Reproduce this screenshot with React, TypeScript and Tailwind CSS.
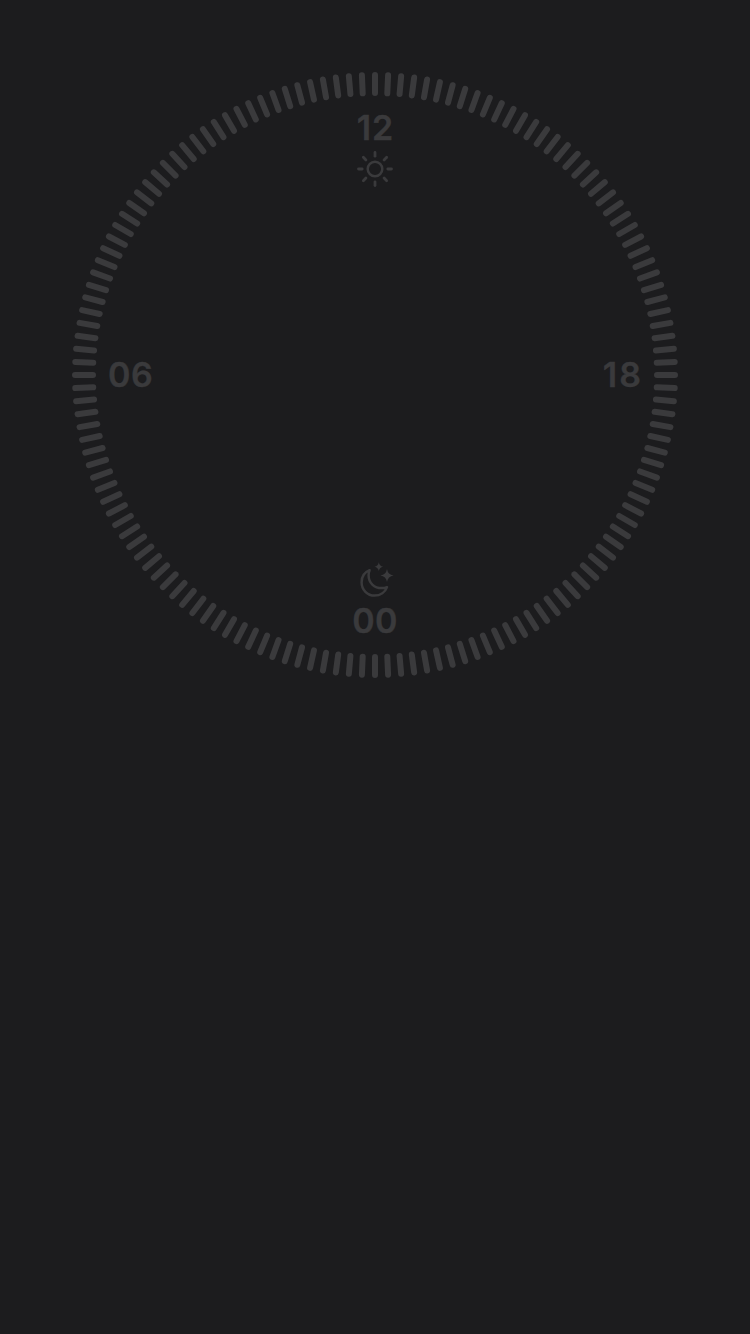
import React from "react";

const TICKS = Array.from({ length: 144 }, (_, i) => i * 2.5);
const RAYS = [0, 45, 90, 135, 180, 225, 270, 315];

function TickRing() {
  return (
    <svg
      className="absolute inset-0 size-full"
      viewBox="-303 -303 606 606"
      stroke="currentColor"
      strokeWidth={6}
      strokeLinecap="round"
    >
      {TICKS.map((angle) => (
        <line key={angle} x1={0} y1={-300} x2={0} y2={-282} transform={`rotate(${angle})`} />
      ))}
    </svg>
  );
}

function SunIcon() {
  return (
    <svg
      className="size-9"
      viewBox="-18 -18 36 36"
      fill="none"
      stroke="currentColor"
      strokeWidth={2.8}
      strokeLinecap="round"
    >
      <circle r={7.3} strokeWidth={2.5} />
      {RAYS.map((angle) => (
        <line key={angle} x1={0} y1={-12.8} x2={0} y2={-16.5} transform={`rotate(${angle})`} />
      ))}
    </svg>
  );
}

function MoonStarsIcon() {
  return (
    <svg className="ml-[5px] h-9 w-[34px]" viewBox="0 0 34 36" fill="none">
      <path
        d="M9.6 8.2C4.7 10.2 1.6 14.6 1.6 20.2C1.6 27.9 7.4 33.6 14.6 33.6C20.3 33.6 25.2 30.2 27 25.1C25.3 25.8 23.6 26.1 21.8 26.1C14.2 26.1 8.6 20.9 8.6 13.2C8.6 11.4 8.9 9.8 9.6 8.2Z"
        stroke="currentColor"
        strokeWidth={2.5}
        strokeLinejoin="round"
      />
      <path
        d="M18.8 0.3Q19.4 4.1 23.1 4.7Q19.4 5.3 18.8 9.1Q18.2 5.3 14.5 4.7Q18.2 4.1 18.8 0.3Z"
        fill="currentColor"
      />
      <path
        d="M27 7Q27.9 12.6 33.6 13.5Q27.9 14.4 27 20Q26.1 14.4 20.4 13.5Q26.1 12.6 27 7Z"
        fill="currentColor"
      />
    </svg>
  );
}

function HourLabel({ children, className = "" }: { children: string; className?: string }) {
  return (
    <span
      className={`text-[34px] leading-[34px] font-semibold [-webkit-text-stroke:0.4px_currentColor] ${className}`}
    >
      {children}
    </span>
  );
}

export default function App() {
  return (
    <main className="flex h-[1334px] w-[750px] justify-center bg-[#1c1c1e] pt-[72px] font-['Inter',sans-serif] text-[#3a3a3c]">
      <section className="relative flex size-[606px] flex-col items-center justify-between px-[35px] pt-[39px] pb-10">
        <TickRing />
        <div className="flex flex-col items-center gap-[6px]">
          <HourLabel className="pl-px tracking-[1px]">12</HourLabel>
          <SunIcon />
        </div>
        <div className="flex w-full items-center justify-between pt-px">
          <HourLabel className="pl-px tracking-[0.5px]">06</HourLabel>
          <HourLabel className="tracking-[2px]">18</HourLabel>
        </div>
        <div className="flex flex-col items-center gap-[6px]">
          <MoonStarsIcon />
          <HourLabel className="tracking-[0.2px]">00</HourLabel>
        </div>
      </section>
    </main>
  );
}
